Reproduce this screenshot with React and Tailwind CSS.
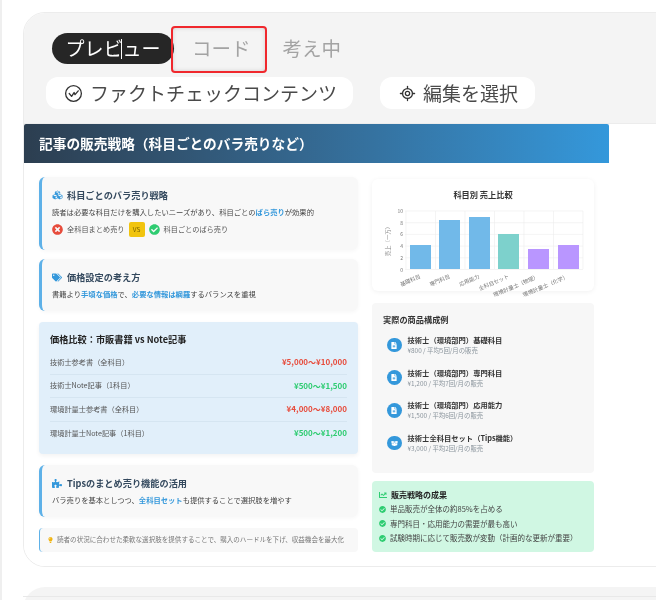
import React from "react";
import { FaCubes, FaTags, FaPuzzlePiece, FaLightbulb, FaTimesCircle, FaCheckCircle, FaFileAlt, FaBoxOpen, FaChartLine } from "react-icons/fa";
import { LocateFixed } from "lucide-react";

function Card({ icon, title, children, h }) {
  return (
    <div className={`rounded-md border-l-[3px] border-[#5eb1e8] bg-[#f8f8f8] pl-[10px] pr-2 pt-[11px] shadow-[0_1px_4px_rgba(0,0,0,0.04)] ${h}`}>
      <div className="flex items-center gap-[4px] text-[9.2px] leading-[14px] font-bold text-[#34495e]">
        <span className="flex w-[11px] items-center">{icon}</span>
        <span>{title}</span>
      </div>
      {children}
    </div>
  );
}

function PriceRow({ label, price, color, last }) {
  return (
    <div className={`flex h-[23.5px] items-center justify-between text-[7.2px] text-[#555] ${last ? "" : "border-b border-[#d5e5f1]"}`}>
      <span>{label}</span>
      <span className={`text-[8px] font-bold ${color}`}>{price}</span>
    </div>
  );
}

function Product({ icon, title, sub }) {
  return (
    <div className="flex items-center gap-[6px] pl-[4px]">
      <div className="flex h-[14.5px] w-[14.5px] items-center justify-center rounded-full bg-[#3498db] text-white">{icon}</div>
      <div>
        <div className="text-[7.3px] leading-[11px] font-bold text-[#333]">{title}</div>
        <div className="text-[6.4px] leading-[9px] text-[#8a949c]">{sub}</div>
      </div>
    </div>
  );
}

function Check({ children }) {
  return (
    <div className="flex items-center gap-[4px] text-[7.5px] leading-[14.6px] text-[#444]">
      <FaCheckCircle className="h-[7px] w-[7px] text-[#2ecc71]" />
      <span>{children}</span>
    </div>
  );
}

function Chart() {
  const bars = [
    [410, 245, "#71b9e9"], [439, 220, "#71b9e9"], [469, 217, "#71b9e9"],
    [498, 234, "#7dd1cc"], [528, 249, "#b996ff"], [558, 245, "#b996ff"],
  ];
  const labels = ["基礎科目", "専門科目", "応用能力", "全科目セット", "環境計量士（物理）", "環境計量士（化学）"];
  const ox = 372, oy = 179;
  return (
    <svg width="222" height="112" className="block overflow-visible" style={{ fontFamily: "'Noto Sans CJK JP', sans-serif" }}>
      {[0, 1, 2, 3, 4, 5].map((i) => (
        <line key={i} x1={405 - ox} x2={583 - ox} y1={211 + i * 11.7 - oy} y2={211 + i * 11.7 - oy} stroke="#ececec" strokeWidth="0.6" />
      ))}
      {[0, 1, 2, 3, 4, 5, 6].map((i) => (
        <line key={i} x1={406 + i * 29.5 - ox} x2={406 + i * 29.5 - ox} y1={211 - oy} y2={269 - oy} stroke="#ececec" strokeWidth="0.6" />
      ))}
      {[10, 8, 6, 4, 2, 0].map((v, i) => (
        <text key={v} x={403 - ox} y={213 + i * 11.7 - oy} textAnchor="end" fontSize="5" fill="#777">{v}</text>
      ))}
      {bars.map(([x, y, c], i) => (
        <rect key={i} x={x - ox} y={y - oy} width="21" height={269 - y} fill={c} />
      ))}
      {labels.map((l, i) => (
        <text key={l} transform={`translate(${421 + i * 29.5 - ox} ${278 - oy}) rotate(-23)`} textAnchor="end" fontSize="5.4" fill="#777">{l}</text>
      ))}
      <text transform={`translate(${390 - ox} ${240 - oy}) rotate(-90)`} textAnchor="middle" fontSize="5.4" fill="#888">売上（一万）</text>
    </svg>
  );
}

export default function App() {
  return (
    <div className="h-[600px] w-[656px] overflow-hidden border-l-2 border-[#efefef] bg-white font-['Noto_Sans_CJK_JP',sans-serif] blur-[0.4px]">
      <div className="ml-[21px] mt-[12px] h-[555px] w-[680px] overflow-hidden rounded-[22px] border border-[#ececec]">
        <div className="relative h-[110px] bg-[#f4f4f4] pl-[28px] pt-[19px]">
          <div className="flex h-[32px] items-center">
            <div className="relative flex h-[31px] w-[122px] items-center justify-center rounded-full bg-[#262626] text-[19px] text-white">
              プレビュー
              <span className="absolute left-[69px] top-[6px] h-[20px] w-px bg-white" />
            </div>
            <div className="ml-[18px] text-[19.5px] text-[#a3a3a3]">コード</div>
            <div className="ml-[32px] text-[19.5px] text-[#a3a3a3]">考え中</div>
          </div>
          <div className="absolute left-[147px] top-[13px] h-[47px] w-[96px] rounded-[4px] border-2 border-[#f0282d] shadow-[inset_0_0_4px_rgba(0,0,0,0.15)]" />
          <div className="ml-[-6px] mt-[13px] flex gap-[27px]">
            <div className="flex h-[32px] w-[307px] items-center gap-[7px] rounded-[12px] bg-white pl-[18px] text-[19px] text-[#4a4a4a]">
              <svg width="19" height="19" viewBox="0 0 20 20" fill="none" stroke="#333" strokeWidth="1.4" strokeLinecap="round" strokeLinejoin="round">
                <circle cx="10" cy="10" r="8.3" />
                <path d="M5.5 10l2.5 3 2.6-4 1 2.2 3.4-4" />
              </svg>
              <span>ファクトチェックコンテンツ</span>
            </div>
            <div className="flex h-[32px] w-[155px] items-center gap-[7px] rounded-[12px] bg-white pl-[19px] text-[19px] text-[#4a4a4a]">
              <LocateFixed className="h-[17px] w-[17px] text-[#333]" strokeWidth={1.8} />
              <span>編集を選択</span>
            </div>
          </div>
        </div>
        <div className="h-[443px] border-t border-[#ececec] bg-white">
          <div className="flex h-[39px] w-[585px] items-center rounded-t-[2px] bg-gradient-to-r from-[#2c3e50] to-[#3498db] pl-[15px] text-[13.7px] font-bold text-white">
            記事の販売戦略（科目ごとのバラ売りなど）
          </div>
          <div className="flex w-[585px] gap-[14px] pl-[15px] pt-[14px]">
            <div className="flex w-[319px] flex-col gap-[9px]">
              <Card h="h-[73px]" icon={<FaCubes className="h-[10px] w-[11px] text-[#3498db]" />} title="科目ごとのバラ売り戦略">
                <p className="mt-[3px] text-[7.3px] leading-[14px] text-[#444]">
                  読者は必要な科目だけを購入したいニーズがあり、科目ごとの<b className="text-[#3498db]">ばら売り</b>が効果的
                </p>
                <div className="mt-[3px] flex items-center text-[7.2px] text-[#555]">
                  <FaTimesCircle className="h-[11px] w-[11px] text-[#e74c3c]" />
                  <span className="ml-[4px]">全科目まとめ売り</span>
                  <span className="ml-[4px] flex h-[15px] w-[16px] items-center justify-center rounded-[2px] bg-[#f1c40f] text-[6.5px] text-[#7a6400]">VS</span>
                  <FaCheckCircle className="ml-[4px] h-[11px] w-[11px] text-[#2ecc71]" />
                  <span className="ml-[4px]">科目ごとのばら売り</span>
                </div>
              </Card>
              <Card h="h-[52px]" icon={<FaTags className="h-[9px] w-[10px] text-[#3498db]" />} title="価格設定の考え方">
                <p className="mt-[3px] text-[7.3px] leading-[14px] text-[#444]">
                  書籍より<b className="text-[#3498db]">手頃な価格</b>で、<b className="text-[#3498db]">必要な情報は網羅</b>するバランスを重視
                </p>
              </Card>
              <div className="mt-[2px] h-[132px] rounded-[4px] bg-[#e1effa] px-[11px] pt-[10px] shadow-[0_2px_4px_rgba(0,0,0,0.05)]">
                <div className="mb-[5px] text-[9.2px] leading-[14px] font-bold text-[#222]">価格比較：市販書籍 vs Note記事</div>
                <PriceRow label="技術士参考書（全科目）" price="¥5,000〜¥10,000" color="text-[#e74c3c]" />
                <PriceRow label="技術士Note記事（1科目）" price="¥500〜¥1,500" color="text-[#2ecc71]" />
                <PriceRow label="環境計量士参考書（全科目）" price="¥4,000〜¥8,000" color="text-[#e74c3c]" />
                <PriceRow label="環境計量士Note記事（1科目）" price="¥500〜¥1,200" color="text-[#2ecc71]" last />
              </div>
              <Card h="mt-[2px] h-[52px]" icon={<FaPuzzlePiece className="h-[9px] w-[10px] text-[#3498db]" />} title="Tipsのまとめ売り機能の活用">
                <p className="mt-[3px] text-[7.3px] leading-[14px] text-[#444]">
                  バラ売りを基本としつつ、<b className="text-[#3498db]">全科目セット</b>も提供することで選択肢を増やす
                </p>
              </Card>
              <div className="mt-[2px] flex h-[24px] items-center gap-[4px] rounded-[4px] border-l border-[#5eb1e8] bg-[#f8f8f8] pl-[8px] text-[6.55px] text-[#777]">
                <FaLightbulb className="h-[6px] w-[5px] text-[#f1b40f]" />
                <span>読者の状況に合わせた柔軟な選択肢を提供することで、購入のハードルを下げ、収益機会を最大化</span>
              </div>
            </div>
            <div className="flex w-[222px] flex-col pt-[2px]">
              <div className="relative h-[112px] rounded-[6px] bg-white shadow-[0_1px_5px_rgba(0,0,0,0.06)]">
                <div className="absolute left-0 right-0 top-[9px] text-center text-[8.2px] leading-[12px] font-bold text-[#333]">科目別 売上比較</div>
                <Chart />
              </div>
              <div className="mt-[12px] h-[170px] rounded-[4px] bg-[#f7f7f7] pl-[11px] pt-[10px]">
                <div className="mb-[10px] text-[8.2px] leading-[12px] font-bold text-[#333]">実際の商品構成例</div>
                <div className="flex flex-col gap-[12.7px]">
                  <Product icon={<FaFileAlt className="h-[7px] w-[6px]" />} title="技術士（環境部門）基礎科目" sub="¥800 / 平均5回/月の販売" />
                  <Product icon={<FaFileAlt className="h-[7px] w-[6px]" />} title="技術士（環境部門）専門科目" sub="¥1,200 / 平均7回/月の販売" />
                  <Product icon={<FaFileAlt className="h-[7px] w-[6px]" />} title="技術士（環境部門）応用能力" sub="¥1,500 / 平均6回/月の販売" />
                  <Product icon={<FaBoxOpen className="h-[7px] w-[7px]" />} title="技術士全科目セット（Tips機能）" sub="¥3,000 / 平均2回/月の販売" />
                </div>
              </div>
              <div className="mt-[8px] h-[71px] rounded-[4px] bg-[#d0f7e3] pl-[7px] pt-[8px]">
                <div className="mb-[1px] flex items-center gap-[4px] text-[8px] leading-[12px] font-bold text-[#222]">
                  <FaChartLine className="h-[8px] w-[8px] text-[#2ecc71]" />
                  <span>販売戦略の成果</span>
                </div>
                <Check>単品販売が全体の約85%を占める</Check>
                <Check>専門科目・応用能力の需要が最も高い</Check>
                <Check>試験時期に応じて販売数が変動（計画的な更新が重要）</Check>
              </div>
            </div>
          </div>
        </div>
      </div>
      <div className="ml-[21px] mt-[20px] h-[40px] w-[680px] rounded-t-[22px] bg-[#f4f4f4]">
        <div className="h-[9px]" />
        <div className="h-px bg-[#e8e8e8]" />
      </div>
    </div>
  );
}
